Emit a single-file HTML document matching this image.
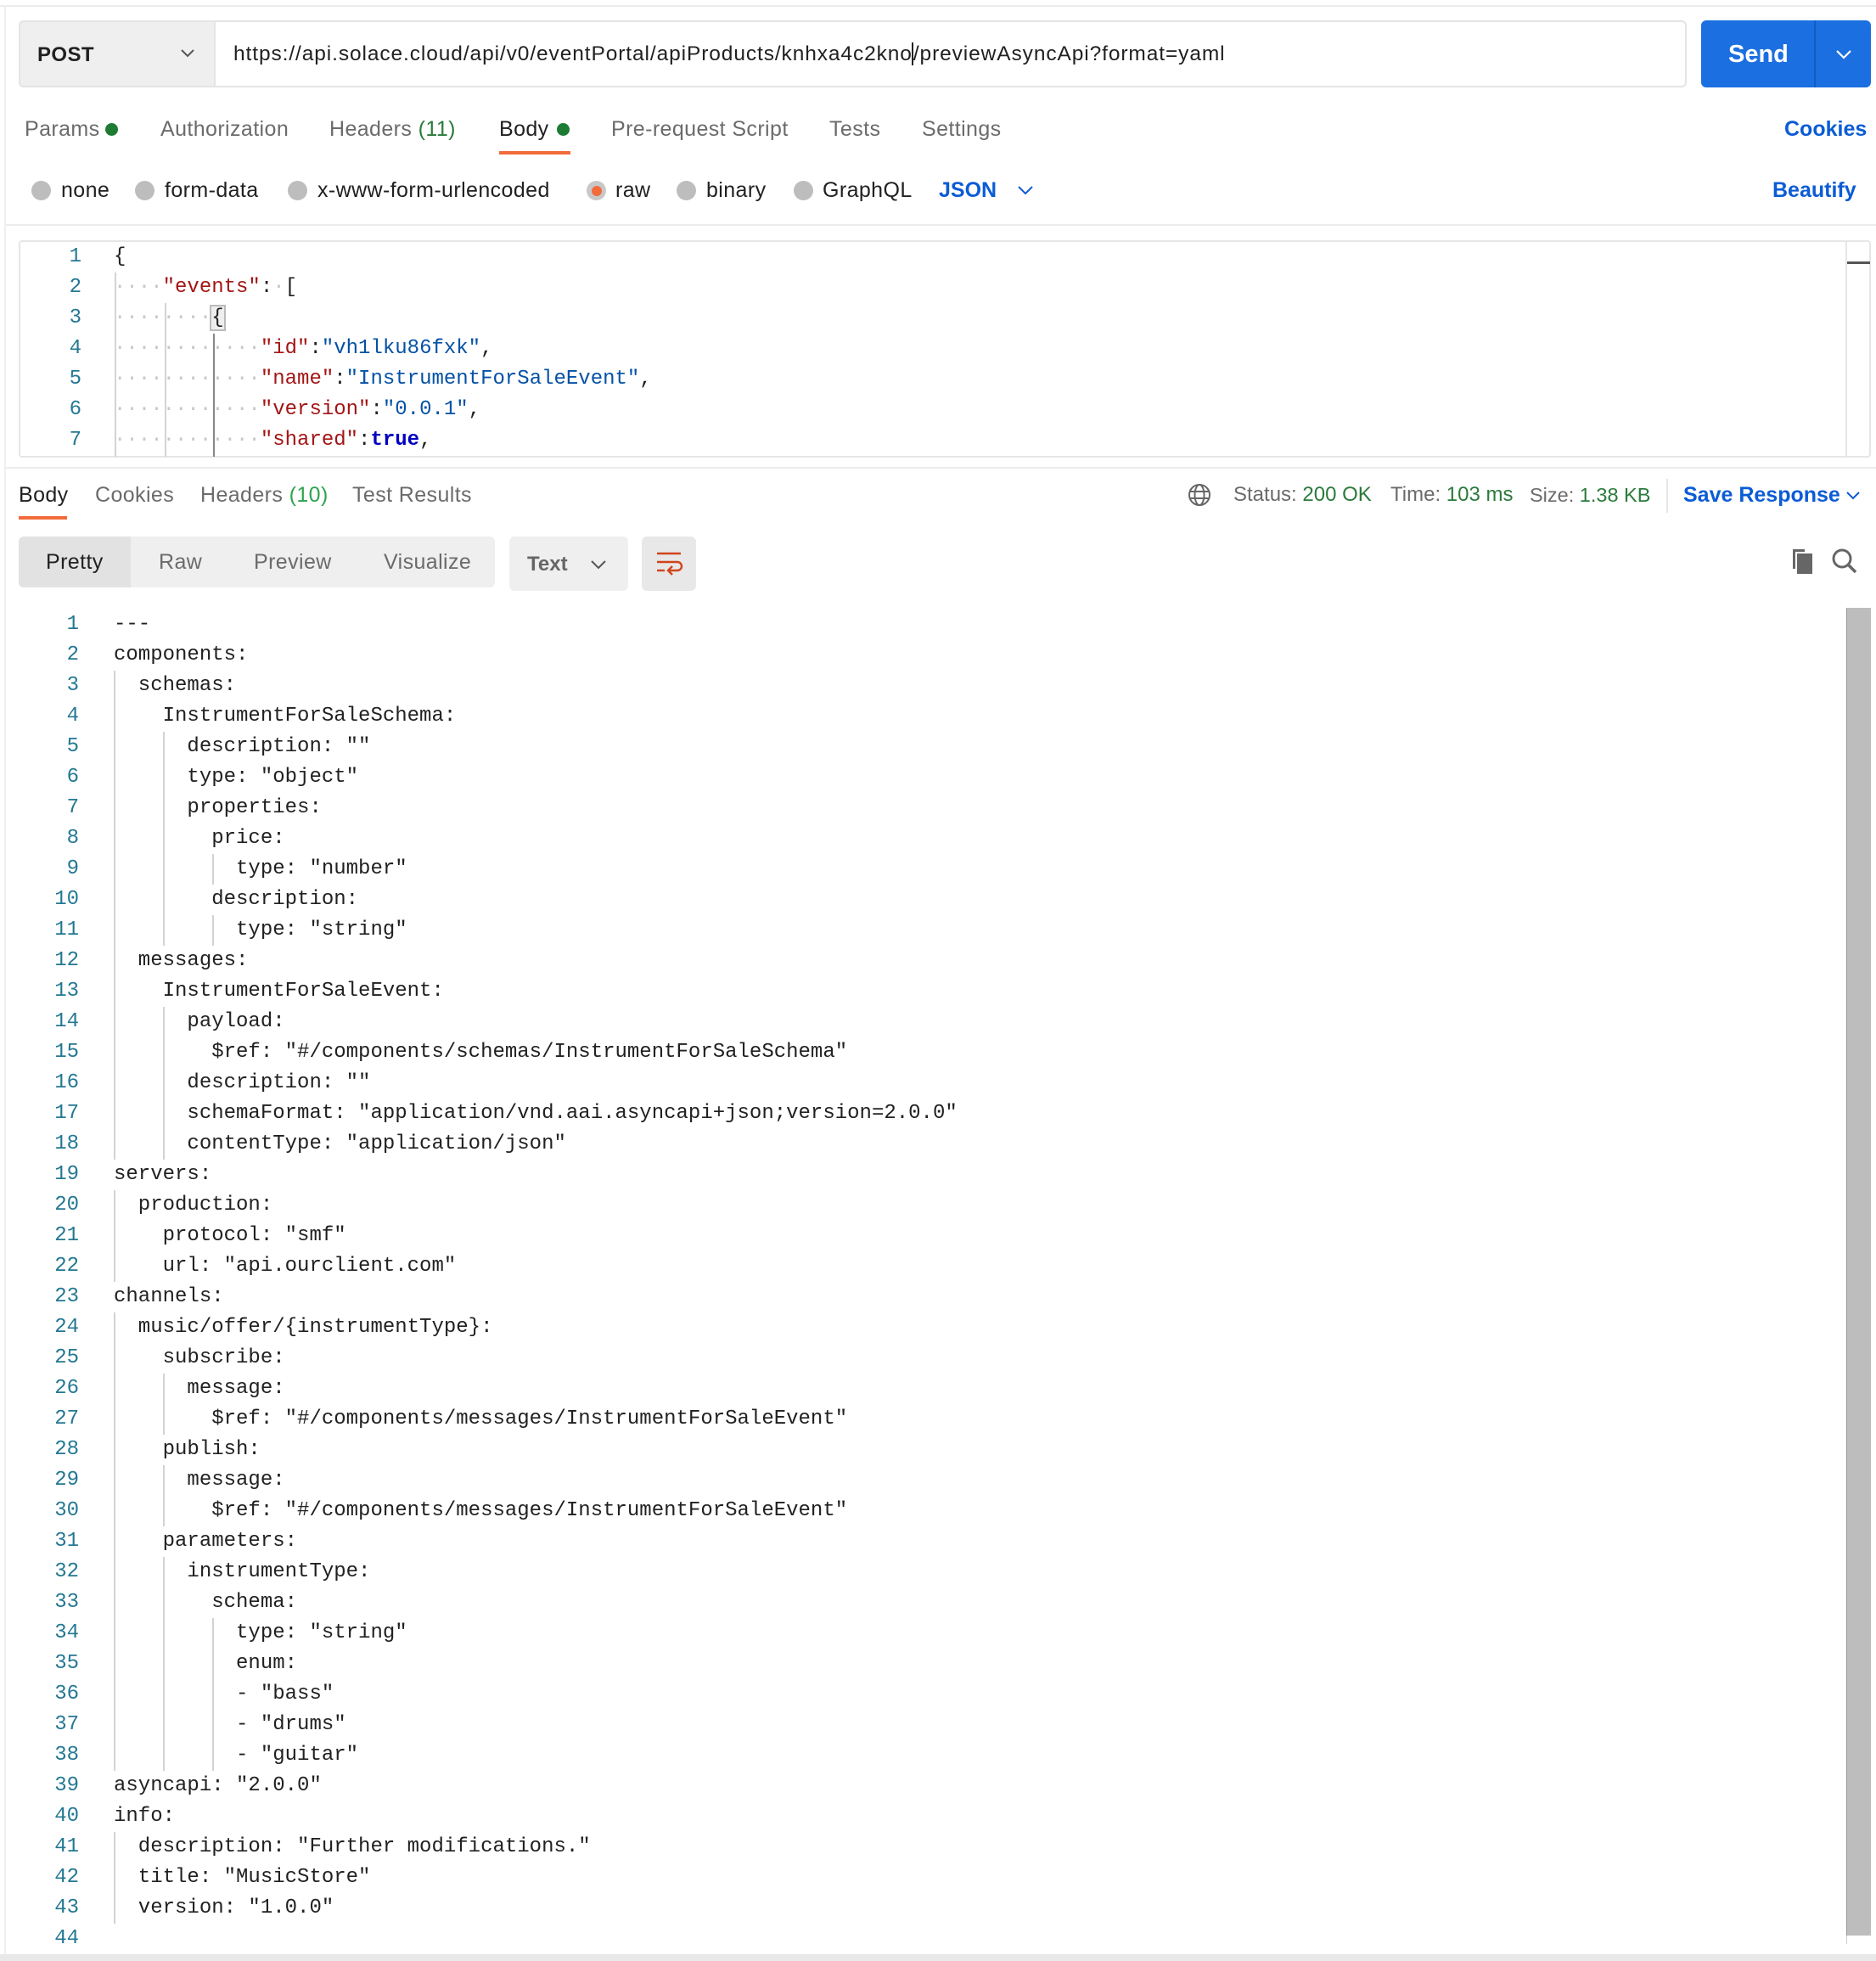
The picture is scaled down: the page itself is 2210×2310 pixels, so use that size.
<!DOCTYPE html>
<html><head><meta charset="utf-8"><style>
*{margin:0;padding:0;box-sizing:border-box}
body{width:2210px;height:2310px;background:#fff;position:relative;overflow:hidden;font-family:"Liberation Sans",sans-serif;color:#6b6b6b}
.a{position:absolute;white-space:nowrap}
.t{font-size:25px;line-height:30px;letter-spacing:0.4px}
.code{font-family:"Liberation Mono",monospace;font-size:24px;line-height:36px;white-space:pre;color:#212121}
.ln{position:absolute;width:60px;text-align:right;font-family:"Liberation Mono",monospace;font-size:24px;line-height:36px;color:#237893}
.g{position:absolute;width:2px;background:#d3d3d3}
.k{color:#a31515}.v{color:#0451a5}.d{color:#c8c8c8}
.rad{position:absolute;width:23px;height:23px;border-radius:50%;background:#bdbdbd}
.blue{color:#0b5cd5;font-weight:bold}
.green{color:#2b7a3b}
.st{letter-spacing:0}
</style></head><body>
<div class="a" style="left:0;top:6px;width:2210px;height:2px;background:#ececec"></div>
<div class="a" style="left:5px;top:6px;width:2px;height:2300px;background:#efefef"></div>
<div class="a" style="left:0;top:2302px;width:2210px;height:8px;background:#e8e8e8"></div>

<div class="a" style="left:22px;top:24px;width:1965px;height:79px;border:2px solid #e4e4e4;border-radius:6px;background:#fff"></div>
<div class="a" style="left:22px;top:24px;width:232px;height:79px;background:#efefef;border:2px solid #e4e4e4;border-radius:6px 0 0 6px"></div>
<div class="a t" style="left:44px;top:50px;color:#212121;font-weight:bold;font-size:24px">POST</div>
<svg class="a" style="left:212px;top:57px" width="18" height="12"><path d="M2 2 L9 9 L16 2" fill="none" stroke="#555" stroke-width="2"/></svg>
<div class="a t" style="left:275px;top:49px;color:#212121;font-size:24.5px;letter-spacing:0.9px">https://api.solace.cloud/api/v0/eventPortal/apiProducts/knhxa4c2kno<span style="border-left:2px solid #222;margin-left:-1px"></span>/previewAsyncApi?format=yaml</div>
<div class="a" style="left:2004px;top:24px;width:200px;height:79px;background:#1b6fe0;border-radius:6px"></div>
<div class="a" style="left:2137px;top:24px;width:2px;height:79px;background:#155bc0"></div>
<div class="a" style="left:2036px;top:47px;color:#fff;font-weight:bold;font-size:29px;line-height:34px">Send</div>
<svg class="a" style="left:2162px;top:58px" width="20" height="12"><path d="M2 2 L10 10 L18 2" fill="none" stroke="#fff" stroke-width="2.2"/></svg>

<div class="a t" style="left:29px;top:137px">Params</div>
<div class="a" style="left:124px;top:145px;width:15px;height:15px;border-radius:50%;background:#1e7b34"></div>
<div class="a t" style="left:189px;top:137px">Authorization</div>
<div class="a t" style="left:388px;top:137px">Headers <span class="green">(11)</span></div>
<div class="a t" style="left:588px;top:137px;color:#212121">Body</div>
<div class="a" style="left:656px;top:145px;width:15px;height:15px;border-radius:50%;background:#1e7b34"></div>
<div class="a" style="left:588px;top:178px;width:84px;height:4px;background:#f26b3a"></div>
<div class="a t" style="left:720px;top:137px">Pre-request Script</div>
<div class="a t" style="left:977px;top:137px">Tests</div>
<div class="a t" style="left:1086px;top:137px">Settings</div>
<div class="a t blue st" style="left:2102px;top:137px">Cookies</div>

<div class="rad" style="left:37px;top:213px"></div><div class="a t" style="left:72px;top:209px;color:#212121">none</div>
<div class="rad" style="left:159px;top:213px"></div><div class="a t" style="left:194px;top:209px;color:#212121">form-data</div>
<div class="rad" style="left:339px;top:213px"></div><div class="a t" style="left:374px;top:209px;color:#212121">x-www-form-urlencoded</div>
<div class="rad" style="left:691px;top:213px;background:#c8c8c8"></div><div class="a" style="left:697px;top:219px;width:12px;height:12px;border-radius:50%;background:#f26b3a"></div>
<div class="a t" style="left:725px;top:209px;color:#212121">raw</div>
<div class="rad" style="left:797px;top:213px"></div><div class="a t" style="left:832px;top:209px;color:#212121">binary</div>
<div class="rad" style="left:935px;top:213px"></div><div class="a t" style="left:969px;top:209px;color:#212121">GraphQL</div>
<div class="a t blue st" style="left:1106px;top:209px">JSON</div>
<svg class="a" style="left:1198px;top:218px" width="20" height="12"><path d="M2 2 L10 10 L18 2" fill="none" stroke="#0b5cd5" stroke-width="2"/></svg>
<div class="a t blue st" style="left:2088px;top:209px">Beautify</div>

<div class="a" style="left:7px;top:264px;width:2203px;height:2px;background:#ececec"></div>

<div class="a" style="left:22px;top:283px;width:2182px;height:256px;border:2px solid #e6e6e6;border-radius:4px;overflow:hidden"></div>
<div class="a" style="left:2174px;top:285px;width:2px;height:252px;background:#e6e6e6"></div>
<div class="a" style="left:2176px;top:308px;width:27px;height:3px;background:#555"></div>
<div class="g" style="left:135px;top:321px;height:217px"></div>
<div class="g" style="left:194px;top:357px;height:181px"></div>
<div class="g" style="left:251px;top:393px;height:145px;background:#888"></div>
<div class="ln" style="left:36px;top:285px">1</div>
<div class="ln" style="left:36px;top:321px">2</div>
<div class="ln" style="left:36px;top:357px">3</div>
<div class="ln" style="left:36px;top:393px">4</div>
<div class="ln" style="left:36px;top:429px">5</div>
<div class="ln" style="left:36px;top:465px">6</div>
<div class="ln" style="left:36px;top:501px">7</div>
<div class="a code" style="left:134px;top:285px">{</div>
<div class="a code" style="left:134px;top:321px"><span class="d">····</span><span class="k">"events"</span>:<span class="d">·</span>[</div>
<div class="a code" style="left:134px;top:357px"><span class="d">········</span><span style="outline:2px solid #bbb;background:#eee">{</span></div>
<div class="a code" style="left:134px;top:393px"><span class="d">············</span><span class="k">"id"</span>:<span class="v">"vh1lku86fxk"</span>,</div>
<div class="a code" style="left:134px;top:429px"><span class="d">············</span><span class="k">"name"</span>:<span class="v">"InstrumentForSaleEvent"</span>,</div>
<div class="a code" style="left:134px;top:465px"><span class="d">············</span><span class="k">"version"</span>:<span class="v">"0.0.1"</span>,</div>
<div class="a code" style="left:134px;top:501px"><span class="d">············</span><span class="k">"shared"</span>:<b style="color:#0000c0">true</b>,</div>

<div class="a" style="left:7px;top:550px;width:2203px;height:2px;background:#ececec"></div>

<div class="a t" style="left:22px;top:568px;color:#212121">Body</div>
<div class="a" style="left:22px;top:608px;width:57px;height:4px;background:#f26b3a"></div>
<div class="a t" style="left:112px;top:568px">Cookies</div>
<div class="a t" style="left:236px;top:568px">Headers <span style="color:#2da44e">(10)</span></div>
<div class="a t" style="left:415px;top:568px">Test Results</div>
<svg class="a" style="left:1398px;top:568px" width="30" height="30" viewBox="0 0 30 30"><g fill="none" stroke="#666" stroke-width="2"><circle cx="15" cy="15" r="12"/><ellipse cx="15" cy="15" rx="5.5" ry="12"/><path d="M3.5 11 H26.5 M3.5 19 H26.5"/></g></svg>
<div class="a t st" style="left:1453px;top:568px;font-size:24px">Status: <span class="green">200 OK</span></div>
<div class="a t st" style="left:1638px;top:568px;font-size:24px">Time: <span class="green">103 ms</span></div>
<div class="a t st" style="left:1802px;top:568px;font-size:23.5px">Size: <span class="green">1.38 KB</span></div>
<div class="a" style="left:1963px;top:564px;width:2px;height:40px;background:#e6e6e6"></div>
<div class="a t blue st" style="left:1983px;top:568px">Save Response</div>
<svg class="a" style="left:2174px;top:578px" width="18" height="12"><path d="M2 2 L9 9 L16 2" fill="none" stroke="#0b5cd5" stroke-width="2"/></svg>

<div class="a" style="left:22px;top:632px;width:561px;height:60px;background:#efefef;border-radius:6px"></div>
<div class="a" style="left:22px;top:632px;width:132px;height:60px;background:#e2e2e2;border-radius:6px 0 0 6px"></div>
<div class="a t" style="left:54px;top:647px;color:#212121">Pretty</div>
<div class="a t" style="left:187px;top:647px">Raw</div>
<div class="a t" style="left:299px;top:647px">Preview</div>
<div class="a t" style="left:452px;top:647px">Visualize</div>
<div class="a" style="left:600px;top:632px;width:140px;height:64px;background:#efefef;border-radius:6px"></div>
<div class="a t st" style="left:621px;top:650px;font-weight:bold;font-size:24px;color:#666">Text</div>
<svg class="a" style="left:695px;top:659px" width="20" height="12"><path d="M2 2 L10 10 L18 2" fill="none" stroke="#555" stroke-width="2"/></svg>
<div class="a" style="left:756px;top:632px;width:64px;height:64px;background:#e8e8e8;border-radius:6px"></div>
<svg class="a" style="left:770px;top:648px" width="40" height="32" viewBox="0 0 40 32"><g fill="none" stroke="#d0451b" stroke-width="2.4"><path d="M4 4 H32"/><path d="M4 24 H13"/><path d="M4 14 H28 a5 5 0 0 1 0 10 H18"/><path d="M22 19 L17 24 L22 29"/></g></svg>
<svg class="a" style="left:2108px;top:644px" width="32" height="34" viewBox="0 0 32 34"><path d="M4 3 H18 V6 H7 V26 H4 Z" fill="#666"/><rect x="9" y="8" width="18" height="24" fill="#666"/></svg>
<svg class="a" style="left:2156px;top:644px" width="34" height="34" viewBox="0 0 34 34"><circle cx="14" cy="14" r="10" fill="none" stroke="#666" stroke-width="3"/><path d="M21 21 L30 30" stroke="#666" stroke-width="3.5"/></svg>

<div class="a" style="left:2175px;top:716px;width:29px;height:1564px;background:#bdbdbd;border-left:1px solid #999"></div>
<div class="a" style="left:2175px;top:2280px;width:1px;height:10px;background:#ccc"></div>

<div style="position:absolute;left:0;top:4px;width:2210px;height:2300px">
<div class="g" style="left:134px;top:786px;height:576px"></div>
<div class="g" style="left:134px;top:1398px;height:108px"></div>
<div class="g" style="left:134px;top:1542px;height:540px"></div>
<div class="g" style="left:134px;top:2154px;height:108px"></div>
<div class="g" style="left:192px;top:858px;height:252px"></div>
<div class="g" style="left:192px;top:1182px;height:180px"></div>
<div class="g" style="left:192px;top:1614px;height:72px"></div>
<div class="g" style="left:192px;top:1722px;height:72px"></div>
<div class="g" style="left:192px;top:1830px;height:252px"></div>
<div class="g" style="left:250px;top:1002px;height:36px"></div>
<div class="g" style="left:250px;top:1074px;height:36px"></div>
<div class="g" style="left:250px;top:1902px;height:180px"></div>

<div class="a" style="left:0;top:714px;width:93px">
<div class="ln" style="position:static;width:93px">1<br>2<br>3<br>4<br>5<br>6<br>7<br>8<br>9<br>10<br>11<br>12<br>13<br>14<br>15<br>16<br>17<br>18<br>19<br>20<br>21<br>22<br>23<br>24<br>25<br>26<br>27<br>28<br>29<br>30<br>31<br>32<br>33<br>34<br>35<br>36<br>37<br>38<br>39<br>40<br>41<br>42<br>43<br>44</div>
</div>
<div class="a code" style="left:134px;top:714px">---
components:
  schemas:
    InstrumentForSaleSchema:
      description: ""
      type: "object"
      properties:
        price:
          type: "number"
        description:
          type: "string"
  messages:
    InstrumentForSaleEvent:
      payload:
        $ref: "#/components/schemas/InstrumentForSaleSchema"
      description: ""
      schemaFormat: "application/vnd.aai.asyncapi+json;version=2.0.0"
      contentType: "application/json"
servers:
  production:
    protocol: "smf"
    url: "api.ourclient.com"
channels:
  music/offer/{instrumentType}:
    subscribe:
      message:
        $ref: "#/components/messages/InstrumentForSaleEvent"
    publish:
      message:
        $ref: "#/components/messages/InstrumentForSaleEvent"
    parameters:
      instrumentType:
        schema:
          type: "string"
          enum:
          - "bass"
          - "drums"
          - "guitar"
asyncapi: "2.0.0"
info:
  description: "Further modifications."
  title: "MusicStore"
  version: "1.0.0"
</div>
</div>
</body></html>
